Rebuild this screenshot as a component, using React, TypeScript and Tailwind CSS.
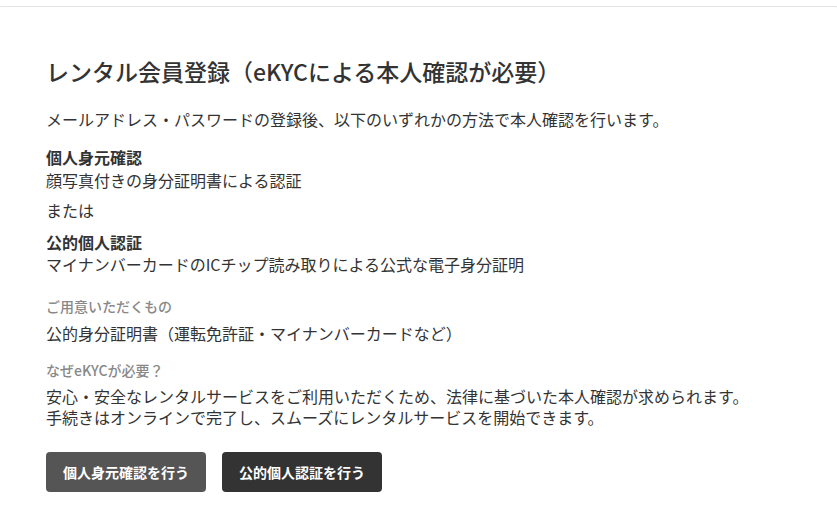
import React from "react";

export default function App() {
  const font = { fontFamily: '"Noto Sans CJK JP", "Noto Sans", sans-serif' };
  return (
    <div className="w-full h-[528px] bg-white pt-[6px] overflow-hidden" style={font}>
      <div className="-ml-[6px] w-[849px] h-[600px] border border-[#e3e3e8] rounded-lg bg-white pl-[51px] pt-[48px] text-[#333]">
        <h2 className="text-[23px] leading-[32px] font-medium">
          レンタル会員登録（eKYCによる本人確認が必要）
        </h2>
        <p className="mt-[20px] text-[16px] leading-[24px]">
          メールアドレス・パスワードの登録後、以下のいずれかの方法で本人確認を行います。
        </p>
        <div className="mt-[15px]">
          <div className="text-[16px] leading-[22px] font-bold">個人身元確認</div>
          <div className="text-[16px] leading-[22px] mt-[1px]">顔写真付きの身分証明書による認証</div>
        </div>
        <div className="mt-[8px] text-[16px] leading-[22px]">または</div>
        <div className="mt-[10px]">
          <div className="text-[16px] leading-[22px] font-bold">公的個人認証</div>
          <div className="text-[16px] leading-[22px]">マイナンバーカードのICチップ読み取りによる公式な電子身分証明</div>
        </div>
        <div className="mt-[21px] text-[14px] leading-[20px] font-medium text-[#888]">ご用意いただくもの</div>
        <div className="mt-[6px] text-[16px] leading-[22px]">公的身分証明書（運転免許証・マイナンバーカードなど）</div>
        <div className="mt-[16px] text-[14px] leading-[20px] font-medium text-[#888]">なぜeKYCが必要？</div>
        <div className="mt-[6px] text-[16px] leading-[21px]">
          <p>安心・安全なレンタルサービスをご利用いただくため、法律に基づいた本人確認が求められます。</p>
          <p>手続きはオンラインで完了し、スムーズにレンタルサービスを開始できます。</p>
        </div>
        <div className="mt-[24px] flex gap-[16px]">
          <button className="w-[160px] h-[40px] rounded-[4px] bg-[#555] text-white text-[14px] font-bold">
            個人身元確認を行う
          </button>
          <button className="w-[160px] h-[40px] rounded-[4px] bg-[#333] text-white text-[14px] font-bold">
            公的個人認証を行う
          </button>
        </div>
      </div>
    </div>
  );
}
